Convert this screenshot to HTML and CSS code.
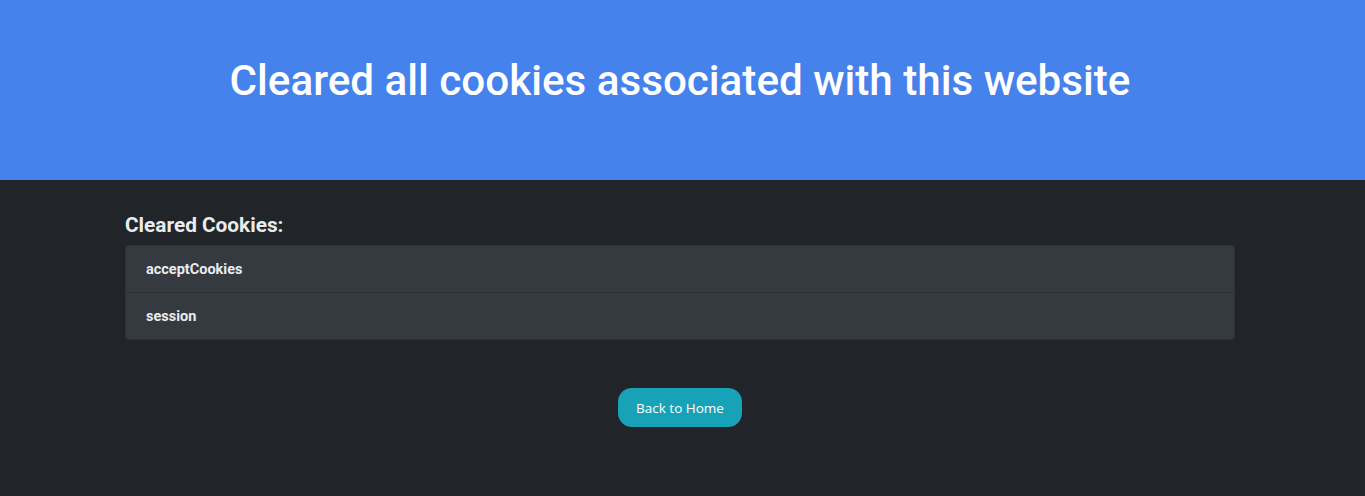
FILE: index.html
```html
<!DOCTYPE html>
<html lang="en">
<head>
<meta charset="utf-8">
<title>Cookies cleared</title>
<link rel="stylesheet" href="styles.css">
</head>
<body>
<div class="page">
  <header class="hero">
    <h1 class="hero-title">Cleared all cookies associated with this website</h1>
  </header>
  <main class="container">
    <h2 class="section-title">Cleared Cookies:</h2>
    <ul class="cookie-list">
      <li class="cookie-item">acceptCookies</li>
      <li class="cookie-item">session</li>
    </ul>
    <div class="actions">
      <a class="btn-home" href="#">Back to Home</a>
    </div>
  </main>
</div>
</body>
</html>
```
FILE: styles.css
```css
* { box-sizing: border-box; }
html, body { margin: 0; padding: 0; }
body {
  background: #212529;
  font-family: Roboto, "Liberation Sans", Arial, sans-serif;
  color: #e9ecef;
  min-height: 496px;
}
.page { padding-right: 5px; }
.hero {
  background: #4582ec;
  height: 180px;
  display: flex;
  justify-content: center;
  padding-top: 56px;
  margin-right: -5px;
}
.hero-title {
  margin: 0;
  font-size: 42.2px;
  font-weight: 500;
  line-height: 1.2;
  color: #ffffff;
  padding-right: 5px;
}
.container {
  width: 1110px;
  margin: 0 auto;
  padding-top: 33px;
}
.section-title {
  margin: 0 0 7px;
  font-size: 20.8px;
  font-weight: 700;
  line-height: 1.2;
  color: #e9ecef;
}
.cookie-list {
  list-style: none;
  margin: 0;
  padding: 0;
  background: #353940;
  border-radius: 4px;
  border: 1px solid #2d3137;
}
.cookie-item {
  padding: 1px 20px 0;
  height: 46px;
  display: flex;
  align-items: center;
  font-size: 14.5px;
  font-weight: 700;
  color: #e9ecef;
}
.cookie-item + .cookie-item {
  height: 47px;
  border-top: 1px solid #2c3036;
}
.actions {
  display: flex;
  justify-content: center;
  padding-top: 48px;
}
.btn-home {
  display: inline-flex;
  align-items: center;
  justify-content: center;
  width: 124px;
  height: 39px;
  border-radius: 14px;
  background: #17a2b8;
  color: #ffffff;
  font-family: "Open Sans", "Liberation Sans", sans-serif;
  font-size: 13.5px;
  padding-top: 2px;
  text-decoration: none;
}
```
